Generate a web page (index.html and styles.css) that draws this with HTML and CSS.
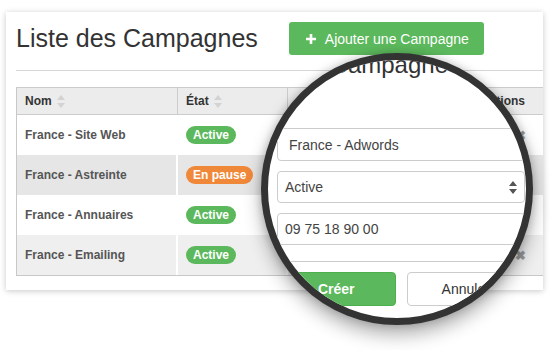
FILE: index.html
```html
<!DOCTYPE html>
<html lang="fr">
<head>
  <meta charset="UTF-8" />
  <title>Liste des Campagnes</title>
  <link rel="stylesheet" href="styles.css">
</head>
<body>
  <div class="card">
    <div class="card-head">
      <h1>Liste des Campagnes</h1>
      <button class="btn-add">
        <svg width="10" height="10" viewBox="0 0 10 10"><path d="M5 0v10M0 5h10" stroke="#fff" stroke-width="2.6"/></svg>
        Ajouter une Campagne
      </button>
    </div>
    <hr class="sep">

    <table class="campaigns">
      <colgroup>
        <col class="c-name"><col class="c-state"><col class="c-phone"><col class="c-actions">
      </colgroup>
      <thead>
        <tr>
          <th>Nom <span class="sort"><svg width="8" height="13" viewBox="0 0 8 13"><path d="M4 0L8 5H0z M4 13L0 8h8z" fill="#d3d3d3"/></svg></span></th>
          <th>État <span class="sort"><svg width="8" height="13" viewBox="0 0 8 13"><path d="M4 0L8 5H0z M4 13L0 8h8z" fill="#d3d3d3"/></svg></span></th>
          <th></th>
          <th class="right">Actions</th>
        </tr>
      </thead>
      <tbody>
        <tr>
          <td>France - Site Web</td>
          <td><span class="badge badge-on">Active</span></td>
          <td></td>
          <td class="right"><span class="del">&#x2716;</span></td>
        </tr>
        <tr class="hover">
          <td>France - Astreinte</td>
          <td><span class="badge badge-pause">En pause</span></td>
          <td></td>
          <td class="right"><span class="del">&#x2716;</span></td>
        </tr>
        <tr>
          <td>France - Annuaires</td>
          <td><span class="badge badge-on">Active</span></td>
          <td></td>
          <td class="right"><span class="del">&#x2716;</span></td>
        </tr>
        <tr class="odd">
          <td>France - Emailing</td>
          <td><span class="badge badge-on">Active</span></td>
          <td></td>
          <td class="right"><span class="del">&#x2716;</span></td>
        </tr>
      </tbody>
    </table>
  </div>

  <!-- loupe sur le formulaire de création -->
  <div class="lens">
    <div class="lens-body">
      <div class="lens-title"><span>Nouvelle Campagne</span></div>
      <div class="field field-first">France - Adwords</div>
      <div class="field field-select">
        <span>Active</span>
        <svg width="8" height="13" viewBox="0 0 8 13"><path d="M4 0L8 5H0z M4 13L0 8h8z" fill="#555"/></svg>
      </div>
      <div class="field field-phone">09 75 18 90 00</div>
      <div class="lens-footer">
        <button class="btn-create">Créer</button>
        <button class="btn-cancel">Annuler</button>
      </div>
    </div>
  </div>
</body>
</html>
```

FILE: styles.css
```css
body {
  margin: 0;
  padding: 0;
  background: #fff;
  font-family: "Liberation Sans", Arial, sans-serif;
  color: #333;
  position: relative;
  width: 550px;
  height: 350px;
  overflow: hidden;
}

.card {
  margin: 12px 0 0 6px;
  width: 537px;
  box-sizing: border-box;
  padding: 10px 0 14px 10px;
  background: #fff;
  box-shadow: 0 1px 6px rgba(0, 0, 0, 0.22);
}

.card-head {
  display: flex;
  align-items: center;
  gap: 31px;
}

.card-head h1 {
  margin: 0;
  font-size: 25px;
  line-height: 33px;
  font-weight: normal;
  color: #333;
}

.btn-add {
  display: flex;
  align-items: center;
  gap: 9px;
  height: 33px;
  width: 195px;
  padding: 0 0 0 17px;
  border: none;
  border-radius: 3px;
  background: #5cb85c;
  color: #fff;
  font-family: "Liberation Sans", Arial, sans-serif;
  font-size: 14px;
  cursor: pointer;
}

.sep {
  margin: 15px 0 16px;
  border: none;
  border-top: 1px solid #d6d6d6;
}

.campaigns {
  width: 527px;
  table-layout: fixed;
  border-collapse: separate;
  border-spacing: 0;
  border-left: 1px solid #c8c8c8;
  border-bottom: 1px solid #c8c8c8;
  font-size: 12px;
}

.c-name { width: 161px; }
.c-state { width: 110px; }
.c-phone { width: 185px; }
.c-actions { width: 70px; }

.campaigns th {
  height: 26px;
  padding: 0 8px;
  text-align: left;
  font-weight: bold;
  color: #333;
  background: #ececec;
  border-top: 1px solid #ccc;
  border-bottom: 1px solid #ccc;
  border-right: 1px solid #ccc;
}

.campaigns th:last-child {
  border-right: none;
}

.sort {
  display: inline-block;
  vertical-align: middle;
  margin-left: 2px;
}

.sort svg {
  display: block;
}

.campaigns td {
  height: 40px;
  padding: 0 8px;
  font-weight: bold;
  color: #555;
  border-right: 2px solid #fff;
}

.campaigns td:last-child {
  border-right: none;
}

.campaigns tr.hover td {
  background: #e6e6e6;
}

.campaigns tr.odd td {
  background: #efefef;
}

.right {
  text-align: right;
}

.campaigns th.right {
  padding-right: 18px;
}

.campaigns td.right {
  padding-right: 17px;
}

.badge {
  display: inline-block;
  padding: 2px 7px;
  border-radius: 9px;
  color: #fff;
  font-size: 12px;
  line-height: 14px;
  font-weight: bold;
}

.badge-on {
  background: #5cb85c;
}

.badge-pause {
  background: #f0883a;
}

.del {
  color: #9a9a9a;
  font-size: 13px;
}

/* loupe */
.lens {
  position: absolute;
  left: 261px;
  top: 53px;
  width: 272px;
  height: 272px;
  box-sizing: border-box;
  border: 7px solid #333;
  border-radius: 50%;
  background: #fff;
  overflow: hidden;
  box-shadow: 0 10px 18px rgba(0, 0, 0, 0.3), 0 0 8px rgba(0, 0, 0, 0.2);
}

.lens-body {
  padding-left: 9px;
  width: 248px;
}

.lens-title {
  display: flex;
  justify-content: flex-end;
  width: 171px;
  margin-top: -7px;
  font-size: 24px;
  line-height: 24px;
  white-space: nowrap;
  color: #333;
}

.field {
  box-sizing: border-box;
  height: 32px;
  border: 1px solid #ccc;
  border-radius: 4px;
  padding: 0 11px;
  display: flex;
  align-items: center;
  font-size: 14px;
  color: #444;
}

.field-first {
  margin-top: 51px;
  height: 33px;
}

.field-select {
  margin-top: 10px;
  padding: 0 7px;
  justify-content: space-between;
}

.field-phone {
  margin-top: 10px;
  padding: 0 7px;
}

.lens-footer {
  margin-top: 16px;
  margin-left: -9px;
  padding: 10px 0 0 9px;
  border-top: 1px solid #ccc;
  display: grid;
  grid-template-columns: 1fr 1fr;
  gap: 11px;
}

.lens-footer button {
  height: 34px;
  border-radius: 4px;
  font-family: "Liberation Sans", Arial, sans-serif;
  font-size: 14px;
}

.btn-create {
  background: #5cb85c;
  border: 1px solid #4cae4c;
  color: #fff;
  font-weight: bold;
}

.btn-cancel {
  background: #fff;
  border: 1px solid #ccc;
  color: #333;
}
```
